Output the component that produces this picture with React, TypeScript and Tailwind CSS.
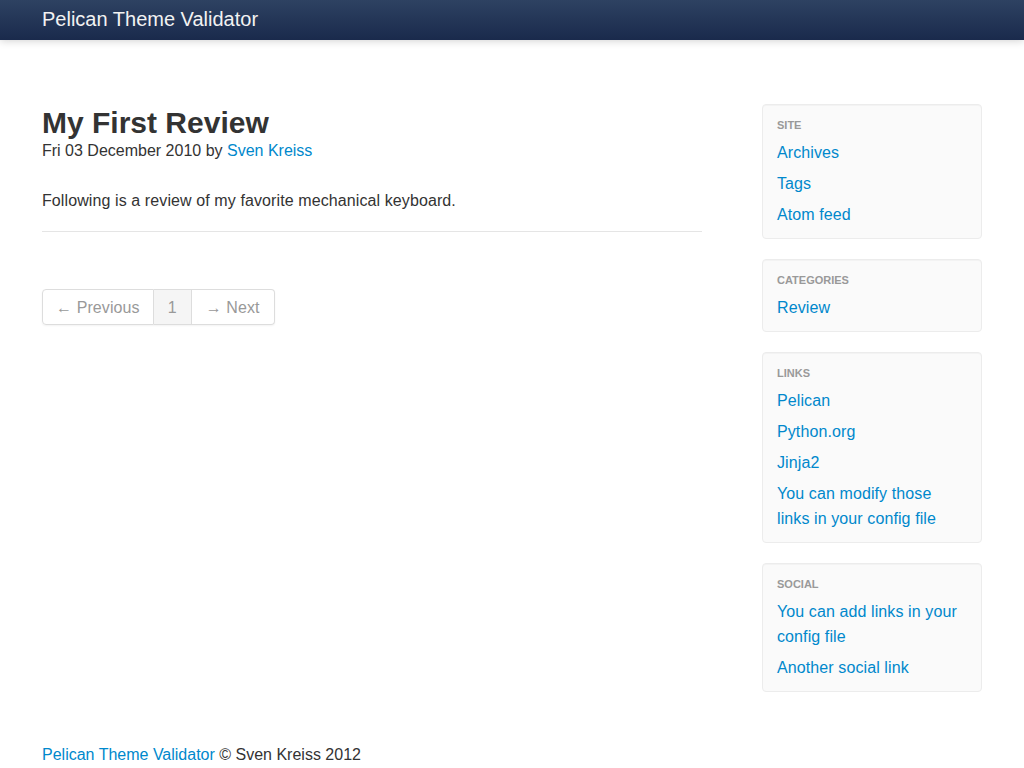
import React from "react";

const sections: { title: string; links: string[] }[] = [
  { title: "Site", links: ["Archives", "Tags", "Atom feed"] },
  { title: "Categories", links: ["Review"] },
  {
    title: "Links",
    links: ["Pelican", "Python.org", "Jinja2", "You can modify those links in your config file"],
  },
  { title: "Social", links: ["You can add links in your config file", "Another social link"] },
];

function SidebarWell({ title, links }: { title: string; links: string[] }) {
  return (
    <div className="mb-[20px] rounded-[4px] border border-[#ececec] bg-[#fafafa] py-[9px] shadow-[inset_0_1px_1px_rgba(0,0,0,0.03)]">
      <div className="px-[14px] py-[3px] text-[11px] font-bold uppercase leading-[16px] tracking-normal text-[#999]">
        {title}
      </div>
      <ul>
        {links.map((l) => (
          <li key={l}>
            <a href="#" className="block pl-[14px] pr-[18px] pt-[4px] pb-[2px] leading-[25px] text-[#0088cc]">
              {l}
            </a>
          </li>
        ))}
      </ul>
    </div>
  );
}

export default function App() {
  return (
    <div
      className="min-h-[768px] bg-white text-[16px] tracking-[0.1px] text-[#333]"
      style={{ fontFamily: '"Liberation Sans", Arial, sans-serif' }}
    >
      {/* Navbar */}
      <div className="h-[40px] bg-gradient-to-b from-[#2e4262] to-[#1a2a4c] shadow-[0_1px_8px_rgba(0,0,0,0.18)]">
        <div className="mx-auto w-[940px]">
          <a href="#" className="block text-[20px] leading-[39px] tracking-normal text-[#f2f2f2]">
            Pelican Theme Validator
          </a>
        </div>
      </div>

      <div className="mx-auto w-[940px] pt-[64px]">
        <div className="flex">
          {/* Main */}
          <div className="w-[700px]">
            <h1 className="pt-[1px] text-[30px] font-bold leading-[36px] tracking-normal text-[#333]">
              My First Review
            </h1>
            <div className="leading-[20px] tracking-normal">
              Fri 03 December 2010 by{" "}
              <a href="#" className="text-[#0088cc]">
                Sven Kreiss
              </a>
            </div>
            <p className="mt-[27px] leading-[25px]">
              Following is a review of my favorite mechanical keyboard.
            </p>
            <hr className="mt-[18px] w-[660px] border-t border-[#e5e5e5]" />

            <div className="mt-[57px] inline-flex rounded-[4px] shadow-[0_1px_2px_rgba(0,0,0,0.05)]">
              <a href="#" className="rounded-l-[4px] border border-[#ddd] px-[13px] pt-[1px] leading-[33px] text-[#999]">
                ← Previous
              </a>
              <a href="#" className="w-[38px] border border-l-0 border-[#ddd] bg-[#f5f5f5] pt-[1px] text-center leading-[33px] text-[#999]">
                1
              </a>
              <a href="#" className="rounded-r-[4px] border border-l-0 border-[#ddd] px-[14px] pt-[1px] leading-[33px] text-[#999]">
                → Next
              </a>
            </div>
          </div>

          {/* Sidebar */}
          <div className="ml-[20px] w-[220px]">
            {sections.map((s) => (
              <SidebarWell key={s.title} title={s.title} links={s.links} />
            ))}
          </div>
        </div>

        <footer className="mt-[33px] leading-[20px] tracking-normal">
          <a href="#" className="text-[#0088cc]">
            Pelican Theme Validator
          </a>{" "}
          © Sven Kreiss 2012
        </footer>
      </div>
    </div>
  );
}
